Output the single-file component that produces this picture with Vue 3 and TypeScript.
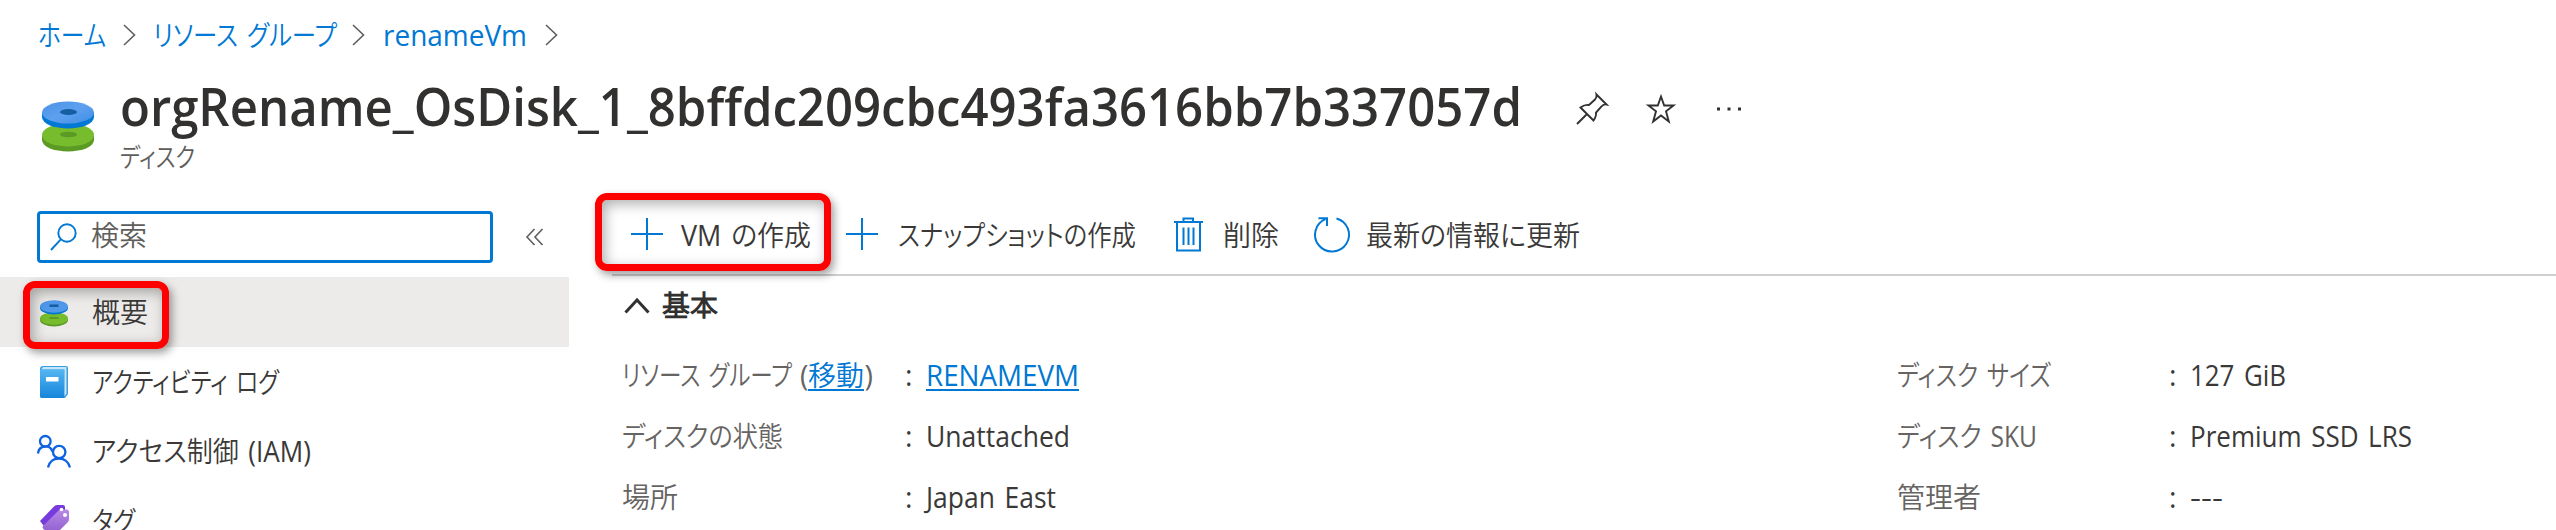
<script setup lang="ts">
interface Crumb { label: string; width: number; kind: string }
interface NavItem { label: string; width: number; icon: string; active?: boolean }
interface Command { label: string; width: number; icon: string; kind: string }
interface Detail { label: string; labelWidth: number; value: string; valueWidth: number; link?: boolean; move?: boolean }

const crumbs: Crumb[] = [
  { label: 'ホーム', width: 68, kind: 'home' },
  { label: 'リソース グループ', width: 184, kind: 'groups' },
  { label: 'renameVm', width: 144, kind: 'group' },
]

const navItems: NavItem[] = [
  { label: '概要', width: 56, icon: 'disk', active: true },
  { label: 'アクティビティ ログ', width: 187, icon: 'log' },
  { label: 'アクセス制御 (IAM)', width: 219, icon: 'iam' },
  { label: 'タグ', width: 43, icon: 'tag' },
]

const commands: Command[] = [
  { label: 'VM の作成', width: 130, icon: 'plus', kind: 'create' },
  { label: 'スナップショットの作成', width: 238, icon: 'plus', kind: 'snapshot' },
  { label: '削除', width: 56, icon: 'trash', kind: 'remove' },
  { label: '最新の情報に更新', width: 214, icon: 'refresh', kind: 'refresh' },
]

const leftDetails: Detail[] = [
  { label: 'リソース グループ', labelWidth: 170, value: 'RENAMEVM', valueWidth: 153, link: true, move: true },
  { label: 'ディスクの状態', labelWidth: 161, value: 'Unattached', valueWidth: 144 },
  { label: '場所', labelWidth: 56, value: 'Japan East', valueWidth: 130 },
]

const rightDetails: Detail[] = [
  { label: 'ディスク サイズ', labelWidth: 154, value: '127 GiB', valueWidth: 96 },
  { label: 'ディスク SKU', labelWidth: 140, value: 'Premium SSD LRS', valueWidth: 222 },
  { label: '管理者', labelWidth: 84, value: '---', valueWidth: 33 },
]

// Condenses or widens a label so that it takes exactly the given width.
const vFit = {
  mounted(el: HTMLElement, binding: { value: number }) {
    const natural = el.getBoundingClientRect().width
    el.style.width = `${binding.value}px`
    el.style.transform = `scaleX(${binding.value / natural})`
  },
}
</script>

<template>
  <div class="portal">
    <nav class="crumbs">
      <template v-for="c in crumbs" :key="c.kind">
        <a class="crumb" :class="c.kind"><span v-fit="c.width" class="fit">{{ c.label }}</span></a>
        <svg class="crumb-sep" width="13" height="22" viewBox="0 0 13 22"><path d="M1 1 L11.5 11 L1 21" /></svg>
      </template>
    </nav>

    <header class="head">
      <svg class="head-icon" width="52" height="52" viewBox="0 0 52 52">
        <defs>
          <linearGradient id="blueTop" x1="0" y1="0" x2="1" y2="1">
            <stop offset="0" stop-color="#4a93e6" /><stop offset="0.5" stop-color="#5ea0ef" /><stop offset="1" stop-color="#3f8de4" />
          </linearGradient>
        </defs>
        <path d="M0 35V39A26 11.500 0 0 0 52 39V35z" fill="#5b9a24" />
        <ellipse cx="26" cy="34" rx="26" ry="11.500" fill="#76bc2d" />
        <ellipse cx="26.500" cy="33.500" rx="8.500" ry="2.700" fill="#5b9a24" />
        <path d="M0 12V16A26 11.500 0 0 0 52 16V12z" fill="#0078d4" />
        <ellipse cx="26" cy="11.500" rx="26" ry="11" fill="url(#blueTop)" />
        <ellipse cx="26.500" cy="11" rx="8.500" ry="3" fill="#155ea1" />
      </svg>
      <div class="head-text">
        <h1 class="title"><span v-fit="1402" class="fit">orgRename_OsDisk_1_8bffdc209cbc493fa3616bb7b337057d</span></h1>
        <div class="subtitle"><span v-fit="75" class="fit">ディスク</span></div>
      </div>
      <div class="head-actions">
        <svg class="act pin" width="32" height="32" viewBox="0 0 32 32"><path d="M1 31 L10.500 21.500 M20.500 1.500 L30.500 11.500 C28 11 27 11.500 25.500 13.500 L20 19.500 C20.500 22.500 20 24 17.500 27.500 L4.500 14.500 C8 12 10 11.500 13 12 L19 6.500 C20.500 5 21 4 20.500 1.500 Z" /></svg>
        <svg class="act star" width="30" height="30" viewBox="0 0 30 30"><path d="M15 2.500 L18.200 11.500 H27.500 L20 17.300 L22.800 27.500 L15 21.500 L7.200 27.500 L10 17.300 L2.500 11.500 H11.800 Z" /></svg>
        <svg class="dots" width="24" height="4" viewBox="0 0 24 4"><path d="M0 .5h3v3h-3zM10.500 .5h3v3h-3zM21 .5h3v3h-3z" /></svg>
      </div>
    </header>

    <div class="body">
      <aside class="side">
        <div class="search-row">
          <div class="search">
            <svg width="27" height="28" viewBox="0 0 27 28"><circle cx="17" cy="10" r="8.700" /><path d="M10.800 16.300 L1 27" /></svg>
            <span v-fit="56" class="fit">検索</span>
          </div>
          <svg class="collapse" width="18" height="18" viewBox="0 0 18 18"><path d="M8.500 1 L1 9 L8.500 17 M16.500 1 L9 9 L16.500 17" /></svg>
        </div>
        <ul class="nav">
          <li v-for="n in navItems" :key="n.icon" class="nav-item" :class="{ active: n.active }">
            <span class="nav-icon">
              <svg v-if="n.icon === 'disk'" class="disk" width="28" height="27" viewBox="0 0 28 27">
                <path d="M0 18V20A14 6.500 0 0 0 28 20V18z" fill="#5b9a24" />
                <ellipse cx="14" cy="18.500" rx="14" ry="6.200" fill="#76bc2d" />
                <path d="M9.500 17h9v2h-9z" fill="#5b9a24" />
                <path d="M0 6V8A14 6.500 0 0 0 28 8V6z" fill="#0078d4" />
                <ellipse cx="14" cy="6.500" rx="14" ry="6.200" fill="#4f98ea" />
                <path d="M9.500 4.500h9v2.500h-9z" fill="#155ea1" />
              </svg>
              <svg v-else-if="n.icon === 'log'" width="28" height="32" viewBox="0 0 28 32">
                <defs>
                  <linearGradient id="book" x1="0" y1="0" x2="0" y2="1"><stop offset="0" stop-color="#55b5f2" /><stop offset="1" stop-color="#1584da" /></linearGradient>
                </defs>
                <path d="M3 0H26q2 0 2 2V28l-3 4H2q-2 0-2-2V3q0-3 3-3z" fill="#3a9fe2" />
                <path d="M3.500 1H26.500V27.500L24.500 30V3.500H1.500Q2 1 3.500 1z" fill="#c5e5f8" />
                <path d="M0 3.500H24V32H2q-2 0-2-2z" fill="url(#book)" />
                <path d="M6 11H18.500V15.500H6z" fill="#fff" />
              </svg>
              <svg v-else-if="n.icon === 'iam'" class="iam" width="34" height="33" viewBox="0 0 34 33">
                <circle cx="8.300" cy="6.300" r="5.300" /><circle cx="22.200" cy="17" r="6.200" />
                <path d="M1 18.500 C2 9.500 13 9.500 15.500 16.500 M11 32.500 C13.500 20.500 30 20.500 33 32.500" />
              </svg>
              <svg v-else width="29" height="32" viewBox="0 0 29 32">
                <defs>
                  <linearGradient id="tag" x1="0" y1="0" x2="0" y2="1"><stop offset="0" stop-color="#b78be6" /><stop offset="1" stop-color="#8a58cb" /></linearGradient>
                </defs>
                <path d="M0 16 L14 1.500 Q15 0 17 0 H23 Q25 0 25 2 V9 L7 25z" fill="#773adc" />
                <path d="M3 21 L18 6 Q19 4.500 21 4.500 H27 Q29 4.500 29 7 V14 Q29 16 28 17 L14 31 Q12 32 10.500 31 L3.500 24 Q2 22.500 3 21z" fill="url(#tag)" />
                <circle cx="21.500" cy="4.500" r="1.800" fill="#fff" /><circle cx="25" cy="10" r="2" fill="#fff" />
              </svg>
            </span>
            <span v-fit="n.width" class="fit">{{ n.label }}</span>
          </li>
        </ul>
        <div class="mark mark-nav"></div>
      </aside>

      <main class="main">
        <div class="toolbar">
          <button v-for="c in commands" :key="c.kind" class="cmd" :class="c.kind">
            <svg v-if="c.icon === 'plus'" width="32" height="32" viewBox="0 0 32 32"><path d="M16 0V32M0 16H32" /></svg>
            <svg v-else-if="c.icon === 'trash'" width="29" height="35" viewBox="0 0 29 35">
              <path d="M0 5H29M9.500 5V1.500H19V5M3 5V33.500H26V5M9.500 10.500V28M14.500 10.500V28M19.500 10.500V28" />
            </svg>
            <svg v-else width="36" height="35" viewBox="0 0 36 35"><path d="M22.500 1.500 A17 16.800 0 1 1 11.500 2.200 M4.500 1.200H13V9" /></svg>
            <span v-fit="c.width" class="fit">{{ c.label }}</span>
          </button>
          <div class="mark mark-cmd"></div>
        </div>

        <section class="essentials">
          <h2 class="ess-head">
            <svg width="26" height="17" viewBox="0 0 26 17"><path d="M1.500 15.500 L13 3 L24.500 15.500" /></svg>
            <span v-fit="56" class="fit">基本</span>
          </h2>
          <div class="ess-cols">
            <dl v-for="(col, i) in [leftDetails, rightDetails]" :key="i" class="details" :class="i ? 'right' : 'left'">
              <div v-for="d in col" :key="d.label" class="detail">
                <dt>
                  <span v-fit="d.labelWidth" class="fit">{{ d.label }}</span>
                  <span v-if="d.move" class="move">(<a v-fit="56" class="fit link">移動</a>)</span>
                </dt>
                <span class="colon">:</span>
                <dd><span v-fit="d.valueWidth" class="fit" :class="{ link: d.link }">{{ d.value }}</span></dd>
              </div>
            </dl>
          </div>
        </section>
      </main>
    </div>
  </div>
</template>

<style>
body { background: #fff; }
</style>

<style scoped>
.portal {
  width: 2556px;
  height: 530px;
  overflow: hidden;
  background: #fff;
  color: #3a3938;
  font: 400 28.6px/40px "Open Sans", "Noto Sans CJK JP DemiLight", "Noto Sans CJK JP", sans-serif;
  font-feature-settings: "palt";
  word-spacing: 3px;
}
svg { display: block; flex: none; overflow: visible; fill: none; }
.fit { display: inline-block; white-space: nowrap; transform-origin: 0 50%; }
.link { color: #0078d4; text-decoration: underline; text-decoration-thickness: 2px; text-underline-offset: 3px; }

.crumbs { display: flex; align-items: center; height: 70px; padding-left: 38px; color: #0078d4; }
.crumb { display: flex; }
.crumb-sep { margin: 0 17px 0 17px; stroke: #605e5c; stroke-width: 1.6; }
.groups + .crumb-sep { margin: 0 18px 0 15px; }
.group + .crumb-sep { margin-left: 18px; }

.head { display: flex; height: 134px; padding-left: 42px; }
.head-icon { margin-top: 31px; }
.head-text { margin-left: 26px; }
.title { display: flex; height: 69px; margin: 0; padding-top: 1px; font-size: 52px; line-height: 70px; font-weight: 600; color: #323130; }
.subtitle { display: flex; height: 36px; margin-top: -1px; font-size: 26px; line-height: 36px; color: #605e5c; }
.head-actions { display: flex; align-items: center; height: 78px; margin-left: 54px; }
.act { stroke: #323130; stroke-width: 1.9; }
.pin { margin-right: 38px; }
.star { margin-right: 41px; }
.dots { fill: #323130; }

.body { display: flex; height: 326px; }
.side { position: relative; width: 569px; }
.search-row { display: flex; align-items: center; height: 66px; margin-top: 0; padding: 0 0 0 37px; }
.search {
  display: flex; align-items: center; gap: 14px; box-sizing: border-box; width: 456px; height: 52px;
  padding-left: 10px; border: 3.5px solid #0078d4; border-radius: 4px; color: #605e5c;
}
.search svg { stroke: #0078d4; stroke-width: 1.9; }
.search .fit { margin-bottom: 4px; }
.collapse { margin-left: 33px; stroke: #605e5c; stroke-width: 1.6; }
.nav { margin: 7px 0 0; padding: 0; list-style: none; }
.nav-item { display: flex; align-items: center; height: 69.700px; padding-left: 36px; }
.nav-item.active { background: #edebe9; }
.nav-icon { display: flex; justify-content: center; width: 36px; margin-right: 20px; }
.disk { margin-top: 3px; }
.iam { stroke: #0f62e0; stroke-width: 2.3; }

.mark { position: absolute; box-sizing: border-box; border: 7.500px solid #f00; border-radius: 12px; box-shadow: 3px 4px 9px rgba(0, 0, 0, .38), inset 3px 4px 13px rgba(0, 0, 0, .32); }
.mark-nav { left: 23px; top: 77px; width: 146px; height: 68px; }
.mark-cmd { left: -17px; top: -11px; width: 236px; height: 78px; }

.main { width: 1944px; margin-left: 43px; }
.toolbar { position: relative; display: flex; align-items: center; box-sizing: border-box; height: 72px; padding: 0 0 10px 19px; border-bottom: 2px solid #d0cfce; }
.cmd { display: flex; align-items: center; padding: 0; border: 0; background: none; color: inherit; font: inherit; word-spacing: inherit; font-feature-settings: inherit; }
.cmd svg { stroke: #0078d4; stroke-width: 2; }
.cmd .fit { margin-top: 1px; }
.create svg { margin-right: 18px; }
.create { margin-right: 35px; }
.snapshot svg { margin-right: 20px; }
.snapshot { margin-right: 38px; }
.remove svg { margin-right: 20px; }
.remove { margin-right: 35px; }
.refresh svg { margin-right: 16px; }

.ess-head { display: flex; align-items: center; gap: 12px; height: 58px; margin: 0; padding-left: 12px; font-size: 28.600px; font-weight: 700; color: #323130; }
.ess-head svg { stroke: #323130; stroke-width: 3; }
.ess-cols { display: grid; grid-template-columns: 1275px 1fr; padding: 11px 0 0 10px; }
.details { margin: 0; }
.detail { display: flex; align-items: center; height: 60.700px; }
dt { display: flex; width: 283px; color: #666462; }
.right dt { width: 272px; }
.move { display: flex; margin-left: 8px; }
.colon { width: 21px; }
dd { display: flex; margin: 0; }
</style>
